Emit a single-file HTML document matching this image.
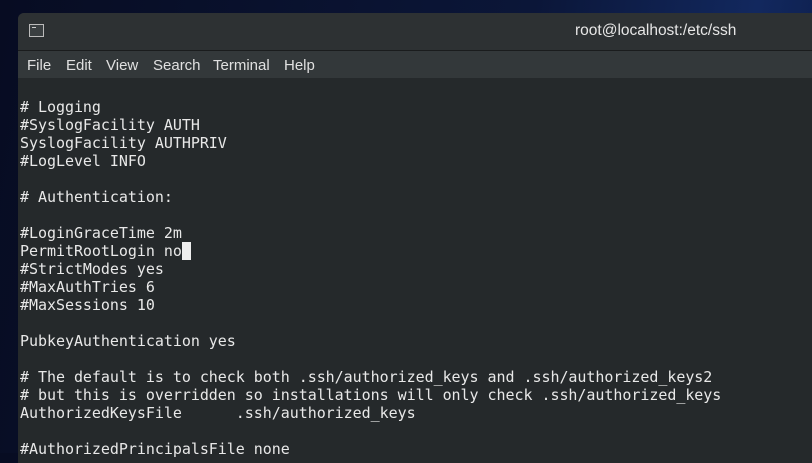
<!DOCTYPE html>
<html><head><meta charset="utf-8"><style>
body{margin:0;width:812px;height:453px;overflow:hidden;background:linear-gradient(100deg,#070c22 0%,#0b1638 60%,#12285e 85%,#0b1a44 100%);position:relative;font-family:"Liberation Sans",sans-serif}
.win{position:absolute;left:18px;top:13px;width:800px;height:450px;background:#25292b;border-radius:6px 0 0 0;overflow:hidden}
.title{height:37px;background:#2d3133;border-bottom:1px solid #1a1c1d;position:relative}
.title .t{position:absolute;left:557px;top:9px;color:#e6e6e6;font-size:15.5px}
.icon{position:absolute;left:11px;top:11px;width:15px;height:13px;border:1px solid #bbb;background:#3a3f41;box-sizing:border-box}
.icon:after{content:"";position:absolute;left:2px;top:2px;width:4px;height:1px;background:#ccc}
.menu{height:27px;background:#33383a;color:#e0e0e0;font-size:15px;position:relative}
.menu span{position:absolute;top:6px}
pre{margin:0;padding:2px 0 0 2px;font-family:"DejaVu Sans Mono","Liberation Mono",monospace;font-size:15px;letter-spacing:-0.04px;line-height:18px;color:#e8e8e8}
.cur{background:#eee;color:#25292b}
</style></head><body>
<div class="win">
<div class="title"><div class="icon"></div><div class="t">root@localhost:/etc/ssh</div></div>
<div class="menu"><span style="left:9px">File</span><span style="left:48px">Edit</span><span style="left:88px">View</span><span style="left:135px">Search</span><span style="left:195px">Terminal</span><span style="left:266px">Help</span></div>
<pre>&nbsp;
# Logging
#SyslogFacility AUTH
SyslogFacility AUTHPRIV
#LogLevel INFO

# Authentication:

#LoginGraceTime 2m
PermitRootLogin no<span class="cur"> </span>
#StrictModes yes
#MaxAuthTries 6
#MaxSessions 10

PubkeyAuthentication yes

# The default is to check both .ssh/authorized_keys and .ssh/authorized_keys2
# but this is overridden so installations will only check .ssh/authorized_keys
AuthorizedKeysFile      .ssh/authorized_keys

#AuthorizedPrincipalsFile none
</pre>
</div>
</body></html>
